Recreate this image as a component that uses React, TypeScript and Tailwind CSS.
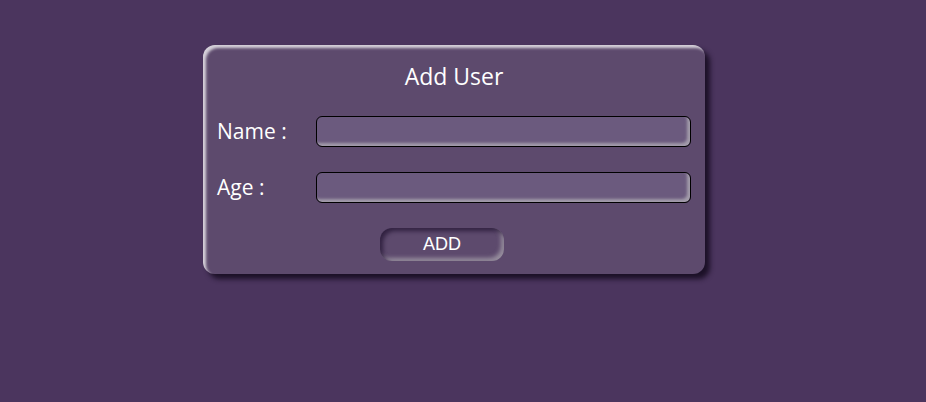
export default function App() {
  return (
    <div className="min-h-[402px] w-full bg-[#4b355e] pt-[45px] font-['Open_Sans',sans-serif]">
      <form
        onSubmit={(e) => e.preventDefault()}
        className="ml-[203px] flex w-[502px] flex-col rounded-[12px] bg-[#5d4a6d] px-[14px] pb-[13px] pt-[16px] text-white shadow-[inset_3px_3px_3px_rgba(255,255,255,0.75),5px_5px_5px_rgba(20,10,30,0.85)]"
      >
        <h2 className="text-center text-[23px] leading-[31px]">Add User</h2>

        <div className="mt-[24px] flex h-[31px] items-center">
          <label className="w-[99px] text-[21px]">Name :</label>
          <input
            type="text"
            className="h-[31px] flex-1 rounded-[6px] border border-black bg-[#6b5a7e] text-white outline-none shadow-[inset_-3px_-3px_3px_rgba(200,200,200,0.6)]"
          />
        </div>

        <div className="mt-[25px] flex h-[31px] items-center">
          <label className="w-[99px] text-[21px]">Age :</label>
          <input
            type="number"
            className="h-[31px] flex-1 rounded-[6px] border border-black bg-[#6b5a7e] text-white outline-none shadow-[inset_-3px_-3px_3px_rgba(200,200,200,0.6)]"
          />
        </div>

        <div className="mt-[25px] flex justify-center">
          <button
            type="submit"
            className="ml-[-24px] h-[33px] w-[124px] rounded-[12px] bg-[#5d4a6d] font-['Liberation_Sans',Arial,sans-serif] text-[18px] text-white shadow-[inset_3px_3px_4px_rgba(30,15,45,0.7),inset_-3px_-3px_4px_rgba(200,200,200,0.55)]"
          >
            ADD
          </button>
        </div>
      </form>
    </div>
  );
}
